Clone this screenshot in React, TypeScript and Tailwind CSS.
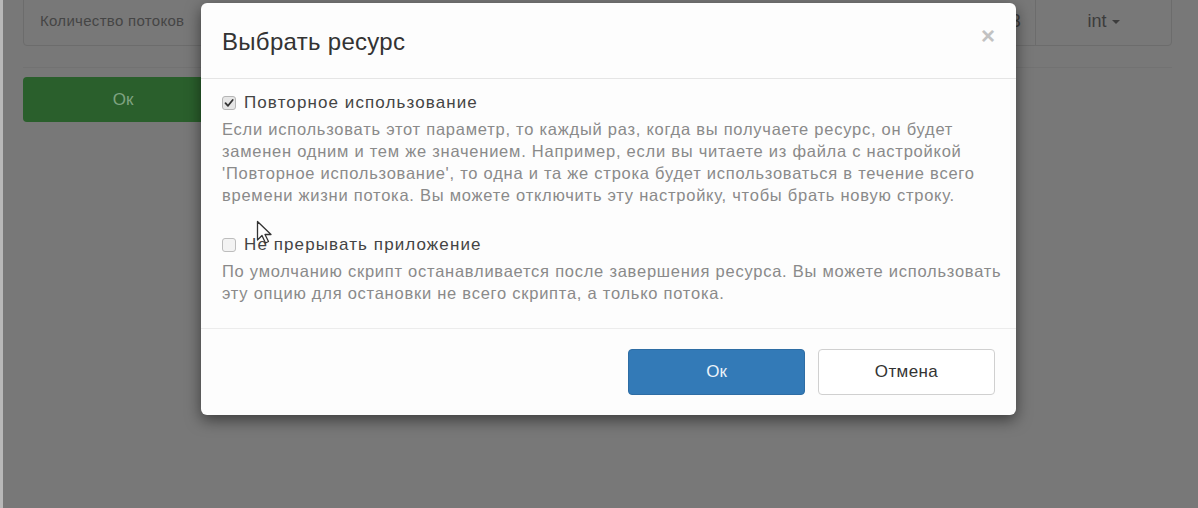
import React from 'react';

function Cursor() {
  return (
    <svg className="absolute left-[256px] top-[220px]" width="20" height="26" viewBox="0 0 20 26">
      <path d="M1.5 1.5 L1.5 20 L6 15.5 L9.5 23 L12.5 21.5 L9 14.5 L15 14.5 Z" fill="#fff" stroke="#333" strokeWidth="1.3" strokeLinejoin="round" />
    </svg>
  );
}

function Option({ checked, label, lines }: { checked: boolean; label: string; lines: string[] }) {
  return (
    <div>
      <label className="flex items-center gap-[8px] text-[17px] tracking-[1.1px] text-[#444] leading-[22px]">
        <span
          className={
            'w-[14px] h-[14px] rounded-[3px] border flex items-center justify-center ' +
            (checked ? 'bg-[#e6e6e6] border-[#b5b5b5]' : 'bg-[#f3f3f3] border-[#bdbdbd]')
          }
        >
          {checked && (
            <svg width="10" height="10" viewBox="0 0 10 10">
              <path d="M1.5 5.2 L4 7.8 L8.7 2" fill="none" stroke="#333" strokeWidth="1.8" strokeLinecap="round" strokeLinejoin="round" />
            </svg>
          )}
        </span>
        {label}
      </label>
      <p className="mt-[4px] text-[16.5px] tracking-[0.75px] leading-[22px] text-[#8a8a8a] whitespace-nowrap">
        {lines.map((l, i) => (
          <React.Fragment key={i}>
            {l}
            {i < lines.length - 1 && <br />}
          </React.Fragment>
        ))}
      </p>
    </div>
  );
}

export default function App() {
  return (
    <div className="relative h-[508px] w-[1198px] overflow-hidden bg-[#787878] font-['Liberation_Sans',Arial,sans-serif]">
      {/* dimmed page behind */}
      <div className="flex h-full">
        <div className="w-[3px] bg-[#b8b8b8]" />
        <div className="flex-1 pl-[20px] pr-[26px]">
          <div className="flex h-[49px] -mt-[3px] border border-[#6c6c6c] rounded-b-[4px]">
            <div className="flex-1 flex items-center justify-between pl-[16px] pr-[14px] text-[15px] tracking-[0.3px] text-[#454545]">
              <span>Количество потоков</span>
              <span className="text-[18px] text-[#3c3c3c]">3</span>
            </div>
            <div className="w-[136px] border-l border-[#6c6c6c] flex items-center justify-center gap-[5px] text-[18px] text-[#3c3c3c]">
              int
              <span className="w-0 h-0 border-l-[4px] border-r-[4px] border-t-[4px] border-l-transparent border-r-transparent border-t-[#3c3c3c]" />
            </div>
          </div>
          <div className="mt-[21px] border-t border-[#727272]" />
          <div className="mt-[9px] w-[200px] h-[45px] rounded-[4px] bg-[#2a5f2c] flex items-center justify-center text-[17px] text-[#7fa381]">
            Ок
          </div>
        </div>
      </div>

      {/* modal */}
      <div className="absolute left-[201px] top-[3px] w-[815px] h-[412px] rounded-[6px] bg-[#fdfdfd] shadow-[0_5px_15px_rgba(0,0,0,0.5)] flex flex-col">
        <div className="h-[76px] border-b border-[#e5e5e5] flex items-center justify-between pl-[21px] pr-[21px] pt-[2px]">
          <h4 className="text-[24px] tracking-[0.3px] text-[#333]">Выбрать ресурс</h4>
          <span className="-mt-[12px] text-[24px] font-bold text-[#c2c2c2] leading-none">×</span>
        </div>
        <div className="px-[21px] pt-[13px] pb-[24px] flex flex-col gap-[28px] border-b border-[#ececec]">
          <Option
            checked
            label="Повторное использование"
            lines={[
              'Если использовать этот параметр, то каждый раз, когда вы получаете ресурс, он будет',
              'заменен одним и тем же значением. Например, если вы читаете из файла с настройкой',
              "'Повторное использование', то одна и та же строка будет использоваться в течение всего",
              'времени жизни потока. Вы можете отключить эту настройку, чтобы брать новую строку.',
            ]}
          />
          <Option
            checked={false}
            label="Не прерывать приложение"
            lines={[
              'По умолчанию скрипт останавливается после завершения ресурса. Вы можете использовать',
              'эту опцию для остановки не всего скрипта, а только потока.',
            ]}
          />
        </div>
        <div className="flex-1 flex items-center justify-end gap-[13px] pr-[21px]">
          <button className="w-[177px] h-[46px] rounded-[4px] bg-[#337ab7] border border-[#2e6da4] text-[17px] text-[#eaf2f9]">Ок</button>
          <button className="w-[177px] h-[46px] rounded-[4px] bg-white border border-[#d0d0d0] text-[17px] tracking-[0.4px] text-[#333]">Отмена</button>
        </div>
      </div>

      <Cursor />
    </div>
  );
}
